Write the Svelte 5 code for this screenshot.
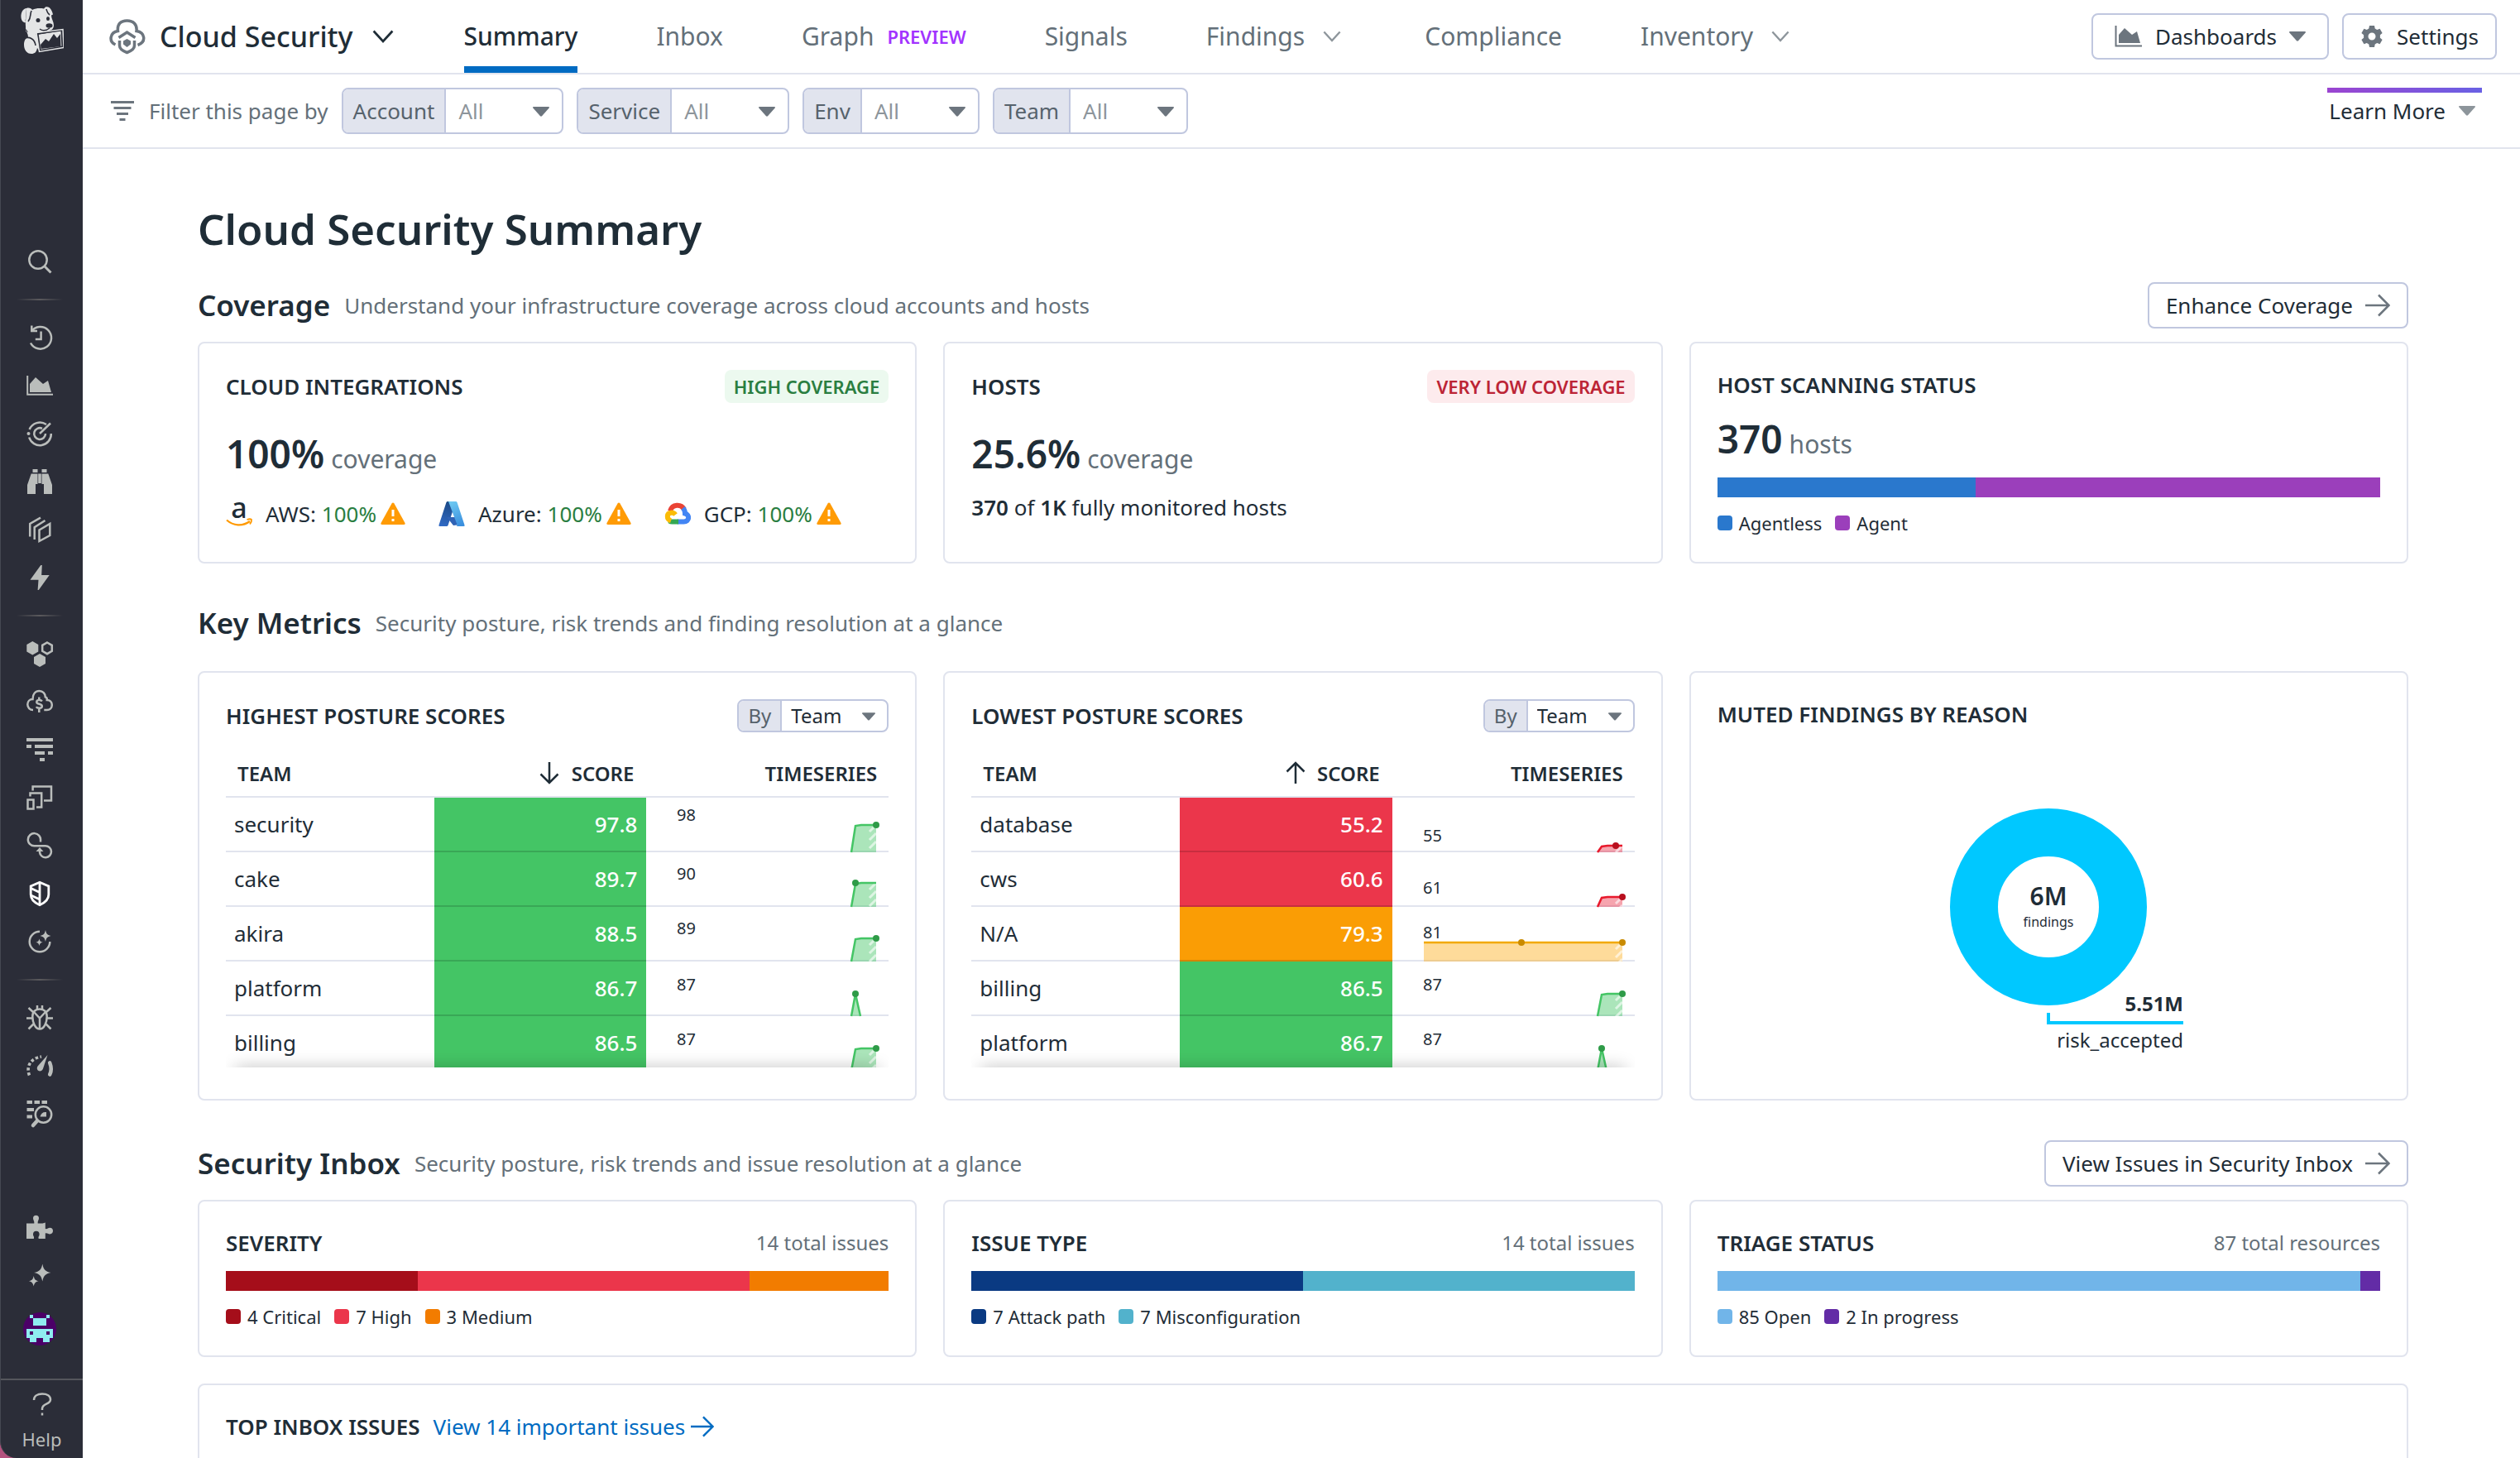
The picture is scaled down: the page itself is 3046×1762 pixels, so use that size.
<script>
  // inner markup of the 32x32 sidebar icons
  const searchIcon = '<circle cx="14" cy="14" r="10.7"/><path d="M21.8 21.8L29.5 29.5" stroke-width="3"/>';

  const navGroups = [
    [
      { name: 'Recent', icon: '<path d="M6 8.5A13.3 13.3 0 1 1 5 22.5"/><path d="M6.3 1.5V8H13"/><path d="M17.6 8.5v9.6h-6.8"/>' },
      { name: 'Dashboards', icon: '<path d="M1.2 4v22.8H32" stroke-width="2"/><path class="solid" d="M4 14l7-8 9 8 6-4 4 14H4z"/>' },
      { name: 'Monitors', icon: '<path d="M3.6 11A13.6 13.6 0 0 1 24 5"/><path d="M3.2 20.5A13.6 13.6 0 0 0 29.8 16"/><path d="M19 9.8A6.9 6.9 0 1 0 23 16"/><path d="M16 16L29 3.5"/><circle class="solid" cx="2.5" cy="16" r="2"/>' },
      { name: 'Watchdog', icon: '<path class="solid" d="M7.5 1h6v4h-6zM18.500 1h6v4h-6zM5.700 6.500h7.800V19h-2.500v12H1V20zM26.300 6.500h-7.800V19h2.500v12h10V20zM14.200 6.500h3.600v11.500h-3.600z"/>' },
      { name: 'Services', icon: '<path d="M15.500 16.500L28.300 9v14L15.500 30z"/><path d="M9.700 28V13.200L22.500 5"/><path d="M4.200 24.500V9L17 1.700"/>' },
      { name: 'Actions', icon: '<path class="solid" d="M17.300 1h1.500L18.200 13h9.500L14.800 31h-1.200l.9-12.300H4.500z"/>' },
    ],
    [
      { name: 'Infrastructure', icon: '<path class="solid" d="M7.300 1l7 4v8.500l-7 4-7-4V5zM16 16l7 4v8l-7 4-7-4v-8z"/><path d="M25 2.500l5.800 3.300v7L25 16.200l-5.800-3.400v-7z"/>' },
      { name: 'Cloud Cost', icon: '<path d="M8 26C4 26 1.300 23 1.300 19.300c0-3.600 2.600-6.200 6.200-6.300C7.500 6.500 11 3 15.500 3c4.300 0 7.300 3.300 7.300 7.300 1.700.5 2.200 1.800 2 3.700 3.500 0 6 2.600 6 6 0 3.400-2.600 6-6 6h-3.500"/><path d="M18.800 15.500c-1.500-2.300-6.500-2-6.500.9 0 3.300 6.500 1.500 6.500 5 0 3-5.500 3.200-7 .7M15.300 10.500v4M15.300 24v5"/>' },
      { name: 'APM', icon: '<path class="solid" d="M0 2h32v4H0zM0 10h6v4H0zM10 10h22v4H10zM10 18h12v4H10zM26 18h6v4h-6zM16 26h6v4h-6z"/>' },
      { name: 'Digital Experience', icon: '<path d="M7.600 7.500V2.500H30V19.500h-9"/><path d="M4.500 14.500v-4H18.200v17H12"/><path d="M1.500 18.500h7v11h-7z"/>' },
      { name: 'Software Delivery', icon: '<path d="M17 11.500V9.500A7.600 7.600 0 1 0 9.300 16.300H22.800A7 7 0 1 1 16 24V22"/><path class="solid" d="M16 18l4.500 5h-9z"/>' },
      { name: 'Security', active: true, icon: '<path d="M16 2.300l10.800 4.600V17c0 5.500-4.500 10-10.800 12.700C9.700 27 5.200 22.500 5.200 17V6.900z"/><path d="M16 2.300v27.400M5.500 9.500l10.500 5M5.500 18l10.500 5"/>' },
      { name: 'AI Observability', icon: '<path d="M16 3.700A12.300 12.300 0 1 0 28.300 16"/><path class="solid" d="M23 2c1 4.500 2 6 6.500 7-4.500 1-5.500 2.500-6.500 7-1-4.500-2-6-6.500-7 4.500-1 5.500-2.500 6.500-7zM15.500 12.500c.7 2.800 1.400 3.500 4.200 4.200-2.800.7-3.500 1.400-4.200 4.200-.7-2.800-1.400-3.500-4.200-4.200 2.800-.7 3.500-1.400 4.200-4.200z"/>' },
    ],
    [
      { name: 'Error Tracking', icon: '<path d="M16 5.500c5 0 8.700 3 8.700 9 0 7-3.200 15-8.700 15s-8.700-8-8.700-15c0-6 3.700-9 8.700-9z"/><path d="M16 30V16.500M9 9l7 7.500L23 9M0 16.500h7M25 16.500h7M2.500 4l6 5.500M29.500 4l-6 5.500M2.500 29.500l6-6M29.500 29.500l-6-6M13 1v5M19 1v5"/>' },
      { name: 'Metrics', icon: '<path class="solid" d="M25.500 3L20 19.500c-1 2.500-3.500 3.500-5.500 2.500-2.200-1.200-2.200-4-.5-6z"/><path d="M3.500 27.500C-.5 18 4 7 18 5" stroke-width="3.600" stroke-dasharray="3.500 2.500"/><path d="M28.200 12.500c2 5 2 10 0 14" stroke-width="4.600" stroke-linecap="round"/>' },
      { name: 'Logs', icon: '<path class="solid" d="M.5 0H7v4H.5zM9.500 0H16v4H9.500zM18.500 0H25v4h-6.500zM.5 9H9v4H.5zM.5 17.500H7v4H.5z"/><circle cx="20.500" cy="17" r="9.700"/><path d="M13 24.500L8 30" stroke-width="4.500" stroke-linecap="round"/><path class="solid" d="M16.500 19.500c1-4 3.500-6 7.500-5.500v5.500z"/>' },
    ],
  ];

  const footerNav = [
    { name: 'Integrations', icon: '<path class="solid" d="M0 11.500h9.300C9.800 9 8 7.500 8 5.200a3.500 3.500 0 0 1 7 0c0 2.300-1.800 3.800-1.300 6.300h5.800l3.300-1v7.500c2 .7 3.400-1.200 5.400-1.200 2.500 0 3.800 1.600 3.800 3.800s-1.300 3.800-3.800 3.800c-2 0-3.400-1.700-5.400-1v6.600h-8c-1-2.500.8-2.800.8-5.500a3.800 3.800 0 0 0-7.600 0c0 2.700 1.800 3 .8 5.500H0z"/>' },
    { name: 'What is new', icon: '<path class="solid" d="M19.300 2.500c1.500 7 3.300 9 10.200 10.500-6.900 1.500-8.700 3.500-10.200 10.500C17.800 16.500 16 14.500 9.100 13c6.900-1.500 8.700-3.500 10.200-10.500zM8.700 17c1 4.400 2 5.400 6 6.300-4 .9-5 2-6 6.300-1-4.300-2-5.400-6-6.300 4-.9 5-1.900 6-6.300z"/>' },
  ];

  const tabs = [
    { label: 'Summary', active: true },
    { label: 'Inbox' },
    { label: 'Graph', tag: 'PREVIEW' },
    { label: 'Signals' },
    { label: 'Findings', menu: true },
    { label: 'Compliance' },
    { label: 'Inventory', menu: true },
  ];

  const filters = ['Account', 'Service', 'Env', 'Team'];

  // labelY and top: where the value label and the curve sit inside the 240x66 cell
  const postureTables = [
    {
      title: 'HIGHEST POSTURE SCORES',
      sort: 'down',
      rows: [
        { team: 'security', score: '97.8', peak: 98, tone: 'green', labelY: 28, top: 33, dots: [240] },
        { team: 'cake', score: '89.7', peak: 90, tone: 'green', labelY: 33, top: 37, dots: [215] },
        { team: 'akira', score: '88.5', peak: 89, tone: 'green', labelY: 33, top: 38, dots: [240] },
        { team: 'platform', score: '86.7', peak: 87, tone: 'green', labelY: 35, top: 39, shape: 'spike', dots: [215] },
        { team: 'billing', score: '86.5', peak: 87, tone: 'green', labelY: 35, top: 39, dots: [240] },
      ],
    },
    {
      title: 'LOWEST POSTURE SCORES',
      sort: 'up',
      rows: [
        { team: 'database', score: '55.2', peak: 55, tone: 'red', labelY: 53, top: 58, dots: [232] },
        { team: 'cws', score: '60.6', peak: 61, tone: 'red', labelY: 50, top: 54, dots: [240] },
        { team: 'N/A', score: '79.3', peak: 81, tone: 'orange', labelY: 38, top: 43, shape: 'full', dots: [118, 240] },
        { team: 'billing', score: '86.5', peak: 87, tone: 'green', labelY: 35, top: 39, dots: [240] },
        { team: 'platform', score: '86.7', peak: 87, tone: 'green', labelY: 35, top: 39, shape: 'spike', dots: [215] },
      ],
    },
  ];

  // value is the share of the bar
  const inboxCards = [
    {
      title: 'SEVERITY',
      total: '14 total issues',
      parts: [
        { label: '4 Critical', value: 29, color: '#a50e1a' },
        { label: '7 High', value: 50, color: '#eb364b' },
        { label: '3 Medium', value: 21, color: '#f27c00' },
      ],
    },
    {
      title: 'ISSUE TYPE',
      total: '14 total issues',
      parts: [
        { label: '7 Attack path', value: 50, color: '#0a3a82' },
        { label: '7 Misconfiguration', value: 50, color: '#52b2cc' },
      ],
    },
    {
      title: 'TRIAGE STATUS',
      total: '87 total resources',
      parts: [
        { label: '85 Open', value: 97, color: '#71b5e9' },
        { label: '2 In progress', value: 3, color: '#632ca6' },
      ],
    },
  ];

  const scanning = [
    { label: 'Agentless', value: 39, color: '#2a78cd' },
    { label: 'Agent', value: 61, color: '#9b3fbb' },
  ];

  function curve(row) {
    if (row.shape === 'full') return `M0 ${row.top}H240`;
    if (row.shape === 'spike') return `M210 66L215 ${row.top}L221 66`;
    return `M210 66L215 ${row.top + 1}L222 ${row.top}H240`;
  }

  function area(row) {
    if (row.shape === 'spike') return curve(row) + 'Z';
    return curve(row) + (row.shape === 'full' ? 'V66H0Z' : 'V66Z');
  }
</script>

{#snippet chevron(size)}
  <svg class="chevron" width={size} height={size} viewBox="0 0 24 24"><path d="M1.500 6L12 17.500 22.500 6" /></svg>
{/snippet}

{#snippet caret()}
  <svg class="caret" width="20" height="12" viewBox="0 0 20 12"><path d="M1 0h18a1 1 0 0 1 .7 1.500L11 11.300q-1 .9-2 0L.3 1.500A1 1 0 0 1 1 0z" /></svg>
{/snippet}

{#snippet arrow()}
  <svg class="arrow" width="30" height="30" viewBox="0 0 30 30"><path d="M0 15h28M16 2.500L28.500 15 16 27.500" /></svg>
{/snippet}

{#snippet warning()}
  <svg class="warning" width="30" height="28" viewBox="0 0 30 28">
    <path d="M13.500 1.500q1.500-2 3 0L29.500 25q.8 2-1.500 2H2q-2.300 0-1.500-2z" fill="#ff9b05" />
    <path d="M13.500 9h3v8h-3zM13.500 20h3v3h-3z" fill="#fff" />
  </svg>
{/snippet}

{#snippet stack(parts)}
  <div class="stack">
    {#each parts as part}
      <span style="flex-grow: {part.value}; background: {part.color}"></span>
    {/each}
  </div>
  <ul class="legend">
    {#each parts as part}
      <li><i style="background: {part.color}"></i>{part.label}</li>
    {/each}
  </ul>
{/snippet}

{#snippet navItem(item)}
  <button class="nav-item" class:active={item.active} aria-label={item.name}>
    <svg width="32" height="32" viewBox="0 0 32 32">{@html item.icon}</svg>
  </button>
{/snippet}

<div class="app">
  <nav class="sidebar">
    <a class="logo" href="/" aria-label="Home">
      <svg width="52" height="58" viewBox="0 0 52 58">
        <path fill="#e4e5e6" d="M7 2C3 2 0 7 .5 13 1 18 4 20 7 19c1 4 0 8-1 11l14 4 30-5 1 20-28 5-3-4c-1 5-3 7-7 7-6 0-9-5-9-11 0-5 2-8 5-9 0-4-2-6-3-10 1-8-1-10 0-12z" />
        <path fill="#e4e5e6" d="M7 2c3-1 6 0 7 2 4-2 9-2.500 14-1.500L30 .5c5-1.500 8 4 9 9l-2 1c0 4 3 8 3 12 0 5-4 7-9 7-4 3-8 4-11 3l-4 3C8 33 5 26 6 18z" />
        <path fill="none" stroke="#2b2d38" stroke-width="1.600" d="M13 5c-2 4 0 8-4 13M31 3c1 3 1 5 4 7M4 38c7-2 13 1 14 9" />
        <path fill="none" stroke="#2b2d38" stroke-width="2" d="M20.500 32.500L49.500 28.500 50.500 48.500 23.500 53z" />
        <path fill="none" stroke="#e4e5e6" stroke-width="1.500" d="M19 31.500L51 27.500 52 49.500 22.500 54.500z" />
        <ellipse cx="21" cy="16.500" rx="2.500" ry="2.500" fill="#2b2d38" />
        <ellipse cx="33" cy="14.500" rx="2" ry="2.500" fill="#2b2d38" />
        <ellipse cx="34.500" cy="23" rx="4" ry="2.800" fill="#2b2d38" />
        <path fill="none" stroke="#2b2d38" stroke-width="1.500" d="M23 27c4 3 8 2 12-1" />
        <path fill="#2b2d38" d="M24.500 51l-.5-5 6-7 4 3 6-9 4 5 4-5 .5 15z" />
      </svg>
    </a>
    {@render navItem({ name: 'Search', icon: searchIcon })}
    {#each navGroups as group}
      <hr />
      {#each group as item}
        {@render navItem(item)}
      {/each}
    {/each}
    <div class="nav-bottom">
      {#each footerNav as item}
        {@render navItem(item)}
      {/each}
      <button class="avatar" aria-label="Account">
        <svg width="40" height="40" viewBox="0 0 40 40">
          <circle cx="20" cy="20" r="20" fill="#4b0067" />
          <path fill="#8fedf0" d="M8 3h4v4H8zM28 3h4v4h-4zM12 7h16v9H12zM4 20h32v11h-4v5h-8v-5h-8v5H8v-5H4z" />
          <path fill="#4b0067" d="M8 23h4v4H8zM28 23h4v4h-4z" />
        </svg>
      </button>
    </div>
    <button class="help">
      <svg width="24" height="28" viewBox="0 0 24 28"><path d="M2 9C2 4.500 6 1.500 12 1.500S22 4 22 8.500c0 6-10 4.500-10 11V21M12 24.500v3" /></svg>
      Help
    </button>
  </nav>

  <div class="page">
    <header class="topbar">
      <button class="product">
        <svg class="product-icon" width="44" height="44" viewBox="0 0 44 44">
          <path d="M7.500 32C-1 28 1 17 10.500 15.500 9.500 7 14 3 21.500 3S34 7.500 33 15.500c10 1.500 12.500 13 1.500 17" />
          <path d="M11.500 23.500l10-6.500 10 6.500M12.500 27v6c0 4.500 5 7 9 8.500 4-1.500 9-4 9-8.500v-6" />
          <path class="dot" d="M21.500 25l4.500 2.500v4L21.500 35 17 31.500v-4z" />
        </svg>
        Cloud Security
        {@render chevron(26)}
      </button>
      <nav class="tabs">
        {#each tabs as tab}
          <a href="#{tab.label.toLowerCase()}" class:active={tab.active}>
            {tab.label}
            {#if tab.tag}<span class="preview">{tab.tag}</span>{/if}
            {#if tab.menu}{@render chevron(22)}{/if}
          </a>
        {/each}
      </nav>
      <div class="top-actions">
        <button class="btn dashboards">
          <svg width="34" height="32" viewBox="0 0 34 32"><path d="M1.500 3v24.500H33" fill="none" stroke="#6c757e" stroke-width="2" /><path d="M5 14l7-8 9 8 6-4 4 14H5z" fill="#6c757e" /></svg>
          Dashboards
          {@render caret()}
        </button>
        <button class="btn settings">
          <svg width="28" height="28" viewBox="0 0 28 28">
            <path fill="#6c757e" fill-rule="evenodd" d="M11 1h6l.7 3.500 2.500 1.400 3.400-1.200 3 5.200-2.700 2.400v3.400l2.700 2.400-3 5.200-3.400-1.200-2.500 1.400L17 27h-6l-.7-3.500-2.500-1.400-3.400 1.200-3-5.200 2.700-2.400v-3.400L1.400 9.900l3-5.200 3.400 1.200 2.500-1.400zM14 9.500a4.500 4.500 0 1 0 0 9 4.500 4.500 0 0 0 0-9z" />
          </svg>
          Settings
        </button>
      </div>
    </header>

    <div class="filterbar">
      <svg class="filter-icon" width="28" height="24" viewBox="0 0 28 24"><path d="M0 1.500h28M3.500 8.500h21M7 15.500h14M10.500 22.500h7" /></svg>
      <span class="filter-text">Filter this page by</span>
      {#each filters as name}
        <label class="picker">
          <span>{name}</span>
          <select><option>All</option></select>
          {@render caret()}
        </label>
      {/each}
      <button class="learn">Learn More {@render caret()}</button>
    </div>

    <main>
      <h1>Cloud Security Summary</h1>

      <section>
        <div class="section-head">
          <h2>Coverage</h2>
          <p>Understand your infrastructure coverage across cloud accounts and hosts</p>
          <button class="btn">Enhance Coverage {@render arrow()}</button>
        </div>
        <div class="grid">
          <article class="card">
            <div class="card-head badged">
              <h3>CLOUD INTEGRATIONS</h3>
              <span class="badge good">HIGH COVERAGE</span>
            </div>
            <p class="big"><b>100%</b> <span>coverage</span></p>
            <ul class="clouds">
              <li>
                <svg class="aws" width="32" height="32" viewBox="0 0 32 32">
                  <text x="16" y="21" text-anchor="middle" font-size="34" font-weight="500">a</text>
                  <path d="M1 23.500c8 7 19 8 28 1.500" fill="none" stroke="#f90" stroke-width="2.200" />
                  <path d="M25.500 23q4-1.500 5.500 0 .5 2.500-2 5.500" fill="none" stroke="#f90" stroke-width="1.800" />
                </svg>
                <span>AWS: <em>100%</em></span>{@render warning()}
              </li>
              <li>
                <svg width="32" height="32" viewBox="0 0 32 32">
                  <defs>
                    <linearGradient id="az-a" x1="0.500" y1="0" x2="0.300" y2="1"><stop offset="0" stop-color="#1b4a86" /><stop offset="1" stop-color="#3069c4" /></linearGradient>
                    <linearGradient id="az-b" x1="0.300" y1="0" x2="0.600" y2="1"><stop offset="0" stop-color="#6cc8f2" /><stop offset="1" stop-color="#3a8fde" /></linearGradient>
                  </defs>
                  <path d="M11 1h10l-9.500 29Q11 31 10 31H1.500Q0 31 .5 29.500L9.500 2Q10 1 11 1z" fill="url(#az-a)" />
                  <path d="M10 20h14l2 9-8 1z" fill="#2f62b5" />
                  <path d="M12 1h9q1 0 1.500 1l9 27.500q.5 1.500-1 1.500H21.500q1.500-.5 1-2z" fill="url(#az-b)" />
                </svg>
                <span>Azure: <em>100%</em></span>{@render warning()}
              </li>
              <li>
                <svg width="32" height="32" viewBox="0 0 32 32" fill="none" stroke-width="6">
                  <path d="M7 12.500C9.500 4 20 3.500 24 10.500" stroke="#ea4335" />
                  <path d="M22.500 9c2 2 2.500 4 2.500 6.500 6 1.500 5.500 10-1.500 10H16" stroke="#4285f4" />
                  <path d="M17 25.500H9.500Q7.500 25.500 6 24.500" stroke="#34a853" />
                  <path d="M8 24.500C2.500 22.500 2 15 9 14.500q2.500 0 4.500 2.500" stroke="#fbbc05" />
                </svg>
                <span>GCP: <em>100%</em></span>{@render warning()}
              </li>
            </ul>
          </article>

          <article class="card">
            <div class="card-head badged">
              <h3>HOSTS</h3>
              <span class="badge bad">VERY LOW COVERAGE</span>
            </div>
            <p class="big"><b>25.6%</b> <span>coverage</span></p>
            <p class="note"><b>370</b> of <b>1K</b> fully monitored hosts</p>
          </article>

          <article class="card">
            <div class="card-head"><h3>HOST SCANNING STATUS</h3></div>
            <p class="big"><b>370</b> <span>hosts</span></p>
            {@render stack(scanning)}
          </article>
        </div>
      </section>

      <section>
        <div class="section-head tall">
          <h2>Key Metrics</h2>
          <p>Security posture, risk trends and finding resolution at a glance</p>
        </div>
        <div class="grid metrics">
          {#each postureTables as table}
            <article class="card">
              <div class="card-head">
                <h3>{table.title}</h3>
                <label class="picker small">
                  <span>By</span>
                  <select><option>Team</option></select>
                  {@render caret()}
                </label>
              </div>
              <div class="table-wrap">
                <table>
                  <thead>
                    <tr>
                      <th class="team">TEAM</th>
                      <th class="score">
                        <svg width="24" height="28" viewBox="0 0 24 28">
                          {#if table.sort === 'down'}
                            <path d="M12 1v25M1.500 15.500L12 26l10.500-10.500" />
                          {:else}
                            <path d="M12 27V2M1.500 12.500L12 2l10.500 10.500" />
                          {/if}
                        </svg>
                        SCORE
                      </th>
                      <th class="series">TIMESERIES</th>
                    </tr>
                  </thead>
                  <tbody>
                    {#each table.rows as row}
                      <tr>
                        <td class="team">{row.team}</td>
                        <td class="score {row.tone}">{row.score}</td>
                        <td class="series">
                          <svg class="spark {row.tone}" width="240" height="66" viewBox="0 0 240 66">
                            <path class="fill" d={area(row)} />
                            {#if row.shape !== 'spike'}
                              <path class="hatch" d="M232 {row.top + 8}l8-8M232 {row.top + 18}l8-8M232 {row.top + 28}l8-8" />
                            {/if}
                            <path class="line" d={curve(row)} />
                            {#each row.dots as x}
                              <circle cx={x} cy={row.top} r="4" />
                            {/each}
                            <text x="-1" y={row.labelY}>{row.peak}</text>
                          </svg>
                        </td>
                      </tr>
                    {/each}
                  </tbody>
                </table>
              </div>
            </article>
          {/each}

          <article class="card">
            <div class="card-head"><h3>MUTED FINDINGS BY REASON</h3></div>
            <svg class="donut" width="340" height="310" viewBox="0 0 340 310">
              <circle cx="170" cy="131" r="90" fill="none" stroke="#00c8ff" stroke-width="58" />
              <path d="M170 259v12h163" fill="none" stroke="#00c8ff" stroke-width="4" />
              <text x="170" y="129" text-anchor="middle" font-size="30" font-weight="600">6M</text>
              <text x="170" y="155" text-anchor="middle" font-size="16">findings</text>
              <text x="333" y="257" text-anchor="end" font-size="24" font-weight="700">5.51M</text>
              <text x="333" y="301" text-anchor="end" font-size="24">risk_accepted</text>
            </svg>
          </article>
        </div>
      </section>

      <section>
        <div class="section-head">
          <h2>Security Inbox</h2>
          <p>Security posture, risk trends and issue resolution at a glance</p>
          <button class="btn">View Issues in Security Inbox {@render arrow()}</button>
        </div>
        <div class="grid">
          {#each inboxCards as card}
            <article class="card">
              <div class="card-head">
                <h3>{card.title}</h3>
                <span class="total">{card.total}</span>
              </div>
              {@render stack(card.parts)}
            </article>
          {/each}
        </div>
        <article class="card top-issues">
          <h3>TOP INBOX ISSUES</h3>
          <a href="#inbox">View 14 important issues {@render arrow()}</a>
        </article>
      </section>
    </main>
  </div>
</div>

<style>
  :global(body) {
    margin: 0;
    background: #b4527e;
  }

  .app {
    display: flex;
    height: 100vh;
    overflow: hidden;
    font-family: 'Noto Sans', sans-serif;
    font-size: 26px;
    line-height: 36px;
    color: #1f2d37;
  }

  h1, h2, h3, p, ul { margin: 0; padding: 0; font-weight: 400; }
  ul { list-style: none; }
  a { color: inherit; text-decoration: none; }
  button, select { font: inherit; color: inherit; background: none; border: 0; padding: 0; margin: 0; cursor: pointer; }
  svg { display: block; flex: none; }
  svg text { font-family: 'Noto Sans', sans-serif; fill: #1f2d37; }

  /* --- sidebar --- */
  .sidebar {
    box-sizing: border-box;
    width: 100px;
    flex: none;
    display: flex;
    flex-direction: column;
    background: #2b2d38;
    border-left: 1px solid #454852;
    border-bottom-left-radius: 20px;
    color: #babdbb;
  }
  .logo { padding: 8px 24px 221px; }
  .nav-item { height: 58px; width: 94px; display: flex; align-items: center; justify-content: center; }
  .nav-item svg { fill: none; stroke: #babdbb; stroke-width: 2.500; overflow: visible; }
  .nav-item :global(.solid) { fill: #babdbb; stroke: none; }
  .nav-item.active svg { stroke: #fff; stroke-width: 2.800; }
  .sidebar hr {
    width: 56px;
    height: 2px;
    border: 0;
    margin: 16px 19px;
    background: linear-gradient(to right, transparent, #5b5a5d, transparent);
  }
  .nav-bottom { margin-top: auto; }
  .avatar { width: 94px; height: 72px; margin-bottom: 24px; display: flex; align-items: center; justify-content: center; }
  .help {
    height: 96px;
    box-sizing: border-box;
    border-top: 2px solid #55565c;
    display: flex;
    flex-direction: column;
    align-items: center;
    gap: 10px;
    padding-top: 15px;
    font-size: 22px;
    color: #babdbb;
  }
  .help svg { fill: none; stroke: #babdbb; stroke-width: 2.500; }

  .page { flex: 1; min-width: 0; background: #fff; }

  /* --- top bar --- */
  .topbar {
    box-sizing: border-box;
    height: 90px;
    display: flex;
    align-items: center;
    padding: 0 28px 0 32px;
    border-bottom: 2px solid #e1e4ee;
  }
  .product { display: flex; align-items: center; gap: 17px; font-size: 34px; font-weight: 500; }
  .product .chevron { margin-left: 6px; }
  .product-icon { fill: none; stroke: #6c757e; stroke-width: 3.500; }
  .product-icon .dot { fill: #6c757e; stroke: none; }
  .chevron { fill: none; stroke: #1f2d37; stroke-width: 2.500; }
  .tabs { align-self: stretch; display: flex; gap: 95px; margin-left: 85px; }
  .tabs a {
    display: flex;
    align-items: center;
    gap: 22px;
    font-size: 30px;
    color: #647079;
    border-top: 8px solid transparent;
    border-bottom: 8px solid transparent;
  }
  .tabs a.active { color: #1f2d37; font-weight: 500; border-bottom-color: #006bc2; }
  .tabs .chevron { stroke: #8d959b; margin-right: 6px; }
  .preview { font-size: 22px; font-weight: 600; color: #a233ff; margin-left: -6px; }
  .top-actions { margin-left: auto; display: flex; gap: 16px; }
  .btn {
    box-sizing: border-box;
    height: 56px;
    display: flex;
    align-items: center;
    gap: 15px;
    padding: 0 20px;
    border: 2px solid #c0c7df;
    border-radius: 8px;
    white-space: nowrap;
  }
  .dashboards { padding: 0 26px; }
  .settings { gap: 16px; }
  .caret { fill: #6c757e; }
  .arrow { fill: none; stroke: #6c757e; stroke-width: 2.500; }

  /* --- filters --- */
  .filterbar {
    box-sizing: border-box;
    height: 90px;
    display: flex;
    align-items: center;
    gap: 16px;
    padding: 0 46px 0 34px;
    border-bottom: 2px solid #e1e4ee;
    color: #647079;
  }
  .filter-icon { stroke: #6c757e; stroke-width: 3; }
  .filter-text { margin-left: 2px; }
  .picker {
    position: relative;
    box-sizing: border-box;
    display: flex;
    height: 56px;
    border: 2px solid #c0c7df;
    border-radius: 8px;
    overflow: hidden;
  }
  .picker span {
    display: flex;
    align-items: center;
    padding: 0 12px;
    background: #e1e4ee;
    border-right: 2px solid #c0c7df;
    color: #56626c;
  }
  .picker select { appearance: none; width: 140px; padding: 0 15px; color: #8d959b; }
  .picker .caret { position: absolute; right: 15px; top: 21px; pointer-events: none; }
  .picker.small { height: 40px; font-size: 24px; }
  .picker.small span { padding: 0 11px; }
  .picker.small select { width: 127px; padding: 0 11px; color: #1f2d37; }
  .picker.small .caret { width: 16px; right: 14px; top: 13px; }
  .learn {
    display: flex;
    align-items: center;
    gap: 16px;
    height: 56px;
    box-sizing: border-box;
    margin-left: auto;
    padding: 0 8px 6px 2px;
    border-top: 6px solid;
    border-image: linear-gradient(to right, #9b44d0, #6961e4) 1;
    color: #1f2d37;
  }
  .learn .caret { fill: #8d959b; }

  /* --- content --- */
  main { padding: 60px 135px 0 139px; }
  h1 { font-size: 51px; line-height: 72px; font-weight: 600; margin-bottom: 29px; }
  section { margin-bottom: 48px; }
  .section-head { display: flex; align-items: center; gap: 17px; margin-bottom: 16px; }
  .section-head.tall { margin-bottom: 34px; }
  .section-head h2 { font-size: 35px; line-height: 48px; font-weight: 600; }
  .section-head p { color: #647079; }
  .section-head .btn { margin-left: auto; }

  .grid { display: grid; grid-template-columns: repeat(3, minmax(0, 1fr)); gap: 32px; }
  .card { padding: 32px; border: 2px solid #e1e4ee; border-radius: 8px; }
  h3 { font-size: 26px; font-weight: 600; }
  .card-head { display: flex; align-items: center; justify-content: space-between; margin-bottom: 16px; }
  .card-head.badged { margin-bottom: 30px; }
  .badge { padding: 2px 11px; border-radius: 8px; font-size: 22px; font-weight: 600; }
  .badge.good { color: #2a7e41; background: #ecf9ef; }
  .badge.bad { color: #bc2435; background: #fdebed; }
  .big { display: flex; align-items: baseline; gap: 8px; margin-bottom: 16px; }
  .big b { font-size: 46px; line-height: 62px; font-weight: 600; }
  .big span { font-size: 30px; color: #647079; }
  .clouds { display: flex; gap: 40px; height: 52px; }
  .clouds li { display: flex; align-items: center; }
  .clouds span { margin: 0 5px 0 16px; }
  .clouds em { font-style: normal; color: #2a7e41; }
  .aws { overflow: visible; }
  .note b { font-weight: 600; }

  .stack { display: flex; height: 24px; margin-bottom: 16px; }
  .stack span { flex-basis: 0; }
  .legend { display: flex; gap: 16px; font-size: 22px; line-height: 30px; }
  .legend li { display: flex; align-items: center; gap: 8px; }
  .legend i { width: 18px; height: 18px; border-radius: 4px; }
  .total { font-size: 24px; color: #647079; }

  /* --- posture tables --- */
  .metrics .card { padding-bottom: 38px; }
  .metrics .card-head { margin-bottom: 23px; }
  .table-wrap { position: relative; height: 382px; overflow: hidden; }
  .table-wrap::after {
    content: '';
    position: absolute;
    left: 12px;
    right: 12px;
    bottom: -16px;
    height: 16px;
    box-shadow: 0 0 20px rgba(0, 0, 0, 0.25);
  }
  table { width: 100%; table-layout: fixed; border-spacing: 0; }
  th, td { box-sizing: border-box; padding: 0; border-bottom: 2px solid #e1e4ee; }
  th { height: 56px; font-size: 24px; font-weight: 600; text-align: right; }
  td { height: 66px; }
  .team { width: 252px; padding-left: 10px; text-align: left; }
  th.team { padding-left: 14px; }
  .score { width: 32%; text-align: right; padding-right: 11px; }
  th.score { padding-right: 15px; }
  th.score svg { display: inline-block; vertical-align: -4px; margin-right: 8px; fill: none; stroke: #1f2d37; stroke-width: 2.500; }
  .series { padding-right: 14px; }
  td.series { padding-right: 15px; }
  td.score { color: #fff; font-weight: 500; border-bottom-color: rgba(0, 0, 0, 0.15); }
  .score.green { background: #44c565; }
  .score.red { background: #eb364b; }
  .score.orange { background: #fa9d05; }
  .spark { margin: 0 0 -2px auto; overflow: visible; }
  .spark text { font-size: 20px; }
  .spark .fill { opacity: 0.45; }
  .spark .line { fill: none; stroke-width: 2.500; }
  .spark .hatch { fill: none; stroke: #fff; stroke-width: 3; opacity: 0.6; }
  .spark.green .fill { fill: #44c565; }
  .spark.green .line { stroke: #44c565; }
  .spark.green circle { fill: #2f9b48; }
  .spark.red .fill { fill: #eb364b; }
  .spark.red .line { stroke: #e8192c; }
  .spark.red circle { fill: #b80f1e; }
  .spark.orange .fill { fill: #fcb01e; }
  .spark.orange .line { stroke: #f2a900; }
  .spark.orange circle { fill: #c98a00; }

  .donut { margin: 84px auto 0; }
  .metrics .card:last-child .card-head { margin-bottom: 0; }

  .top-issues { display: flex; gap: 16px; margin-top: 32px; min-height: 100px; }
  .top-issues a { display: flex; height: 36px; align-items: center; gap: 7px; color: #006bc2; }
  .top-issues .arrow { stroke: #006bc2; width: 28px; }
</style>
